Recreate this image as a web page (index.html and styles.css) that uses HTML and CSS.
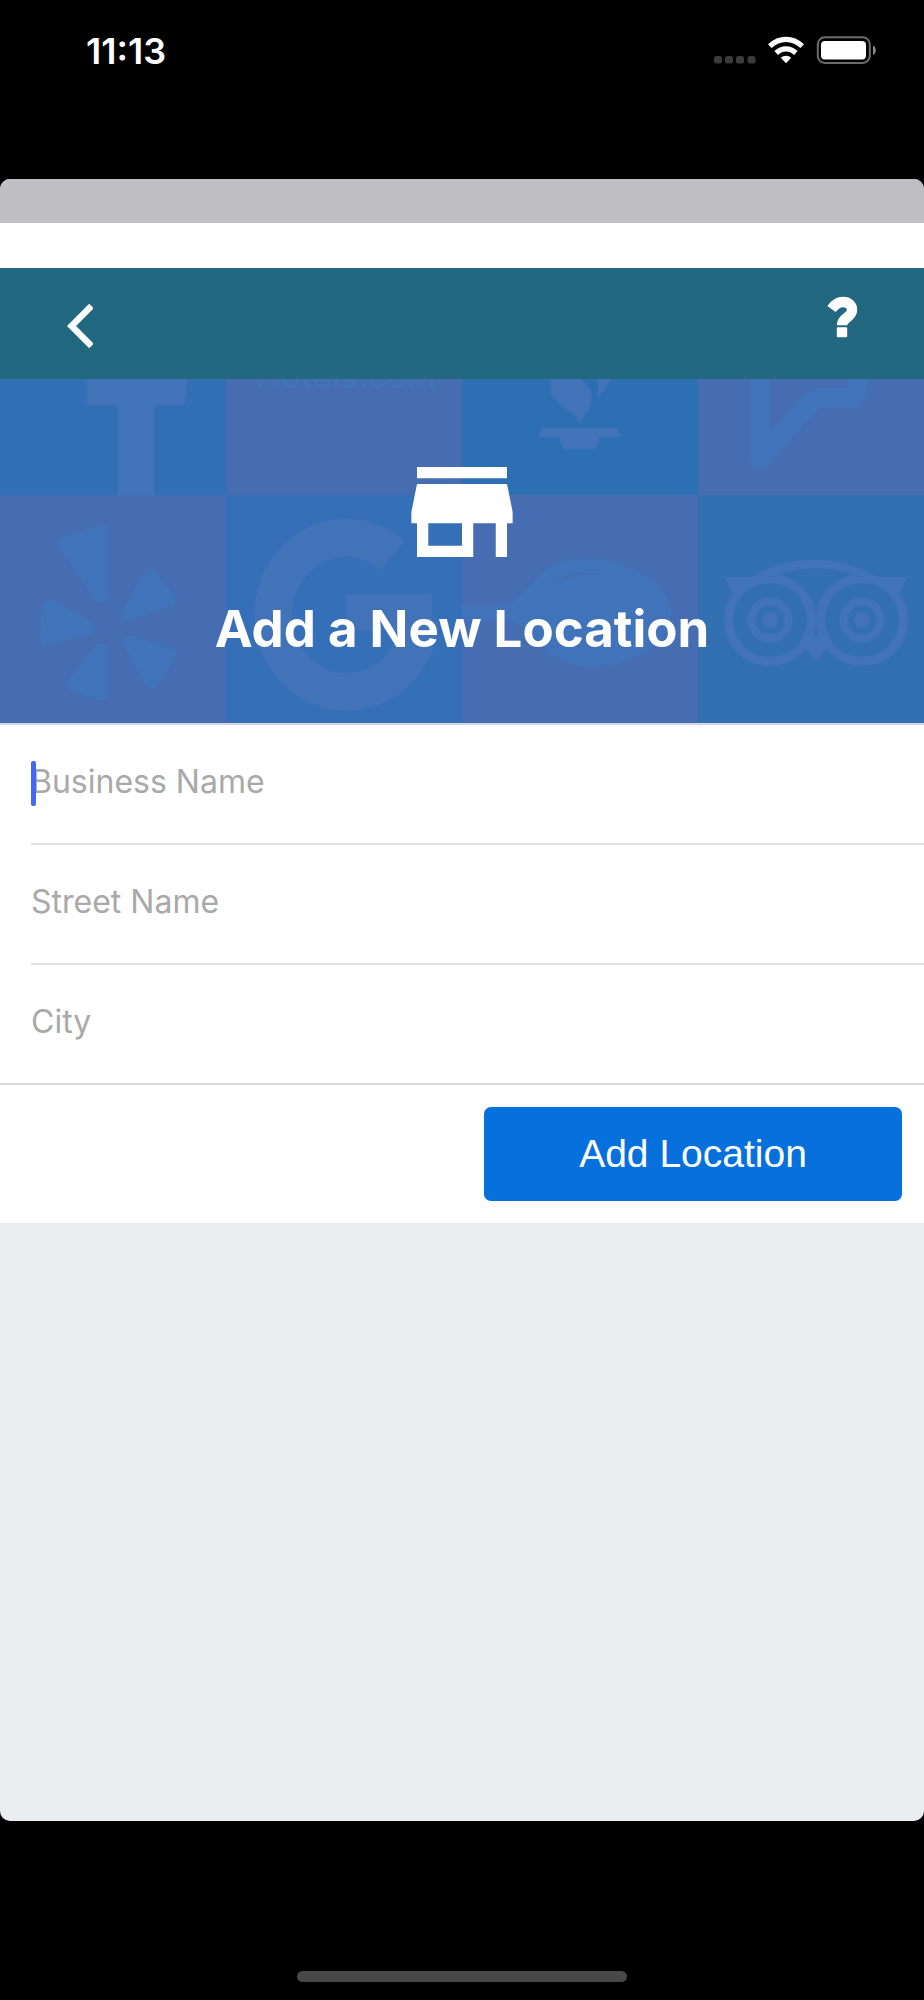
FILE: index.html
```html
<!DOCTYPE html>
<html lang="en">
<head>
<meta charset="utf-8">
<meta name="viewport" content="width=device-width, initial-scale=1">
<title>Add a New Location</title>
<link rel="stylesheet" href="styles.css">
</head>
<body>
<header class="status">
  <time class="status-time">11:13</time>
  <svg class="status-icons" viewBox="0 0 162 28" aria-hidden="true">
    <g fill="#3b3b3b">
      <rect x="0" y="20" width="8" height="7.5" rx="2.5"/>
      <rect x="11" y="20" width="8" height="7.5" rx="2.5"/>
      <rect x="22" y="20" width="8" height="7.5" rx="2.5"/>
      <rect x="33.500" y="20" width="8" height="7.5" rx="2.5"/>
    </g>
    <g fill="none" stroke="#fff" stroke-width="5.200">
      <path d="M55.800 10.200C65.500 1.200 78.500 1.200 88.200 10.200"/>
      <path d="M62.200 17C68 11.600 76 11.600 81.800 17"/>
    </g>
    <path fill="#fff" d="M66.800 21.800C69.500 19 74.500 19 77.200 21.800L72 27.300Z"/>
    <rect x="103.800" y="1.300" width="52" height="25.600" rx="7" fill="none" stroke="#6b6b6b" stroke-width="2"/>
    <rect x="107" y="5" width="45" height="18.600" rx="4" fill="#fff"/>
    <path fill="#8a8a8a" d="M159 9.500C162.700 11 162.700 17.500 159 19Z"/>
  </svg>
</header>

<main class="sheet">
  <div class="sheet-grip"></div>
  <div class="sheet-gap"></div>
  <nav class="navbar">
    <button class="nav-btn" type="button" aria-label="Back">
      <svg class="icon-back" viewBox="67 303 26 46"><path d="M91.500 306L71.500 326L91.500 346" fill="none" stroke="#fff" stroke-width="6.500"/></svg>
    </button>
    <button class="nav-btn nav-help" type="button" aria-label="Help">
      <svg class="icon-help" viewBox="827 296 32 42">
        <path d="M831.500 309C835.500 303.500 838.500 302 843 302C848.500 302 852 305 852 310C852 317.500 842 317.500 842 325.200" fill="none" stroke="#fff" stroke-width="10.400"/>
        <rect x="836.800" y="327.300" width="10.400" height="10" rx="1" fill="#fff"/>
      </svg>
    </button>
  </nav>

  <section class="hero">
    <svg class="hero-art" viewBox="0 0 924 344" preserveAspectRatio="xMidYMid slice" aria-hidden="true">
      <rect width="924" height="344" fill="#466db1"/>
      <rect width="226" height="116" fill="#326fb7"/>
      <rect x="462" width="236" height="116" fill="#2d6fb3"/>
      <rect x="226" y="116" width="236" height="228" fill="#346fb7"/>
      <rect x="698" y="116" width="226" height="228" fill="#3370b1"/>
      <g fill="#4272b8">
        <path d="M87 0H188L184.500 26H87Z"/>
        <rect x="118" y="25" width="36" height="91"/>
        <path d="M551 0C549 8 550 16 555 21C562 29 571 33 577 38V42L579.500 44L589 30C594 21 594 8 579 0Z"/>
        <path d="M597 0C599 6 598 12 597 16L598 19L612 0Z"/>
        <path d="M541 49H617L621 58H600L596 70H563L559 58H538Z"/>
      </g>
      <text x="257" y="9" class="hero-brand">Hotels.com</text>
      <path d="M760 -10V80L811 23Q815 19 820 19H850Q855 19 856 12L861 -10" fill="none" stroke="#4073b9" stroke-width="20" stroke-linejoin="round"/>
      <g fill="#4073b9" stroke="#4073b9" stroke-width="14" stroke-linejoin="round">
        <path d="M65 165L101 152V217Z"/>
        <path d="M150 197L169 221L128 235Z"/>
        <path d="M49 227L88 248L47 260Z"/>
        <path d="M101 271V315L74 305Z"/>
        <path d="M130 263L169 276L152 302Z"/>
      </g>
      <path d="M393 176A73.500 77 0 1 0 420 242" fill="none" stroke="#4272b8" stroke-width="38"/>
      <rect x="346" y="215" width="86" height="37" rx="3" fill="#4272b8"/>
      <path d="M462 226H500C531 226 531 179 584 179C630 179 671 205 671 233C671 262 635 288 591 288C538 288 538 242 505 242H462Z" fill="#4073b9"/>
      <path d="M557 203C566 193 582 192 607 196C588 195 572 196 560 203Z" fill="#466db1"/>
      <g fill="none" stroke="#4272b8" stroke-width="9">
        <circle cx="770" cy="241" r="41.500"/>
        <circle cx="862" cy="241" r="41.500"/>
        <circle cx="770" cy="241" r="18.500" stroke-width="8"/>
        <circle cx="862" cy="241" r="18.500" stroke-width="8"/>
      </g>
      <g fill="#4272b8">
        <circle cx="770" cy="241" r="8"/>
        <circle cx="862" cy="241" r="8"/>
        <path d="M724 198H752C788 175 840 175 876 198H908L898 216L894 222C888 206 876 198 860 197C835 187 797 187 772 197C756 198 744 206 738 222L733 214Z"/>
        <path d="M805 269L816 256L827 269L816 283Z"/>
      </g>
    </svg>
    <svg class="icon-store" viewBox="3 4 18 16" aria-hidden="true"><path fill="#fff" d="M20 4H4v2h16V4zm1 10v-2l-1-5H4l-1 5v2h1v6h10v-6h4v6h2v-6h1zm-9 4H6v-4h6v4z"/></svg>
    <h1 class="hero-title">Add a New Location</h1>
  </section>

  <form class="form">
    <div class="field field-active"><input class="field-input" type="text" aria-label="Business Name" placeholder="Business Name"></div>
    <div class="field"><input class="field-input" type="text" aria-label="Street Name" placeholder="Street Name"></div>
    <div class="field"><input class="field-input" type="text" aria-label="City" placeholder="City"></div>
    <div class="actions"><button class="submit" type="button">Add Location</button></div>
  </form>
</main>

<footer class="dock"><div class="home-bar"></div></footer>
</body>
</html>
```

FILE: styles.css
```css
* {
  box-sizing: border-box;
}

body {
  margin: 0;
  min-height: 100vh;
  display: flex;
  flex-direction: column;
  background: #000;
  font-family: Inter, "Liberation Sans", sans-serif;
}

button {
  border: 0;
  padding: 0;
  cursor: pointer;
}

svg {
  display: block;
}

.status {
  display: flex;
  justify-content: space-between;
  align-items: flex-start;
  height: 179px;
  padding: 30px 48px 0 86px;
  color: #fff;
}

.status-time {
  font-size: 36px;
  font-weight: 600;
  line-height: 42px;
}

.status-icons {
  width: 162px;
  height: 28px;
  margin-top: 6px;
}

.sheet {
  flex: 1;
  display: flex;
  flex-direction: column;
  overflow: hidden;
  border-radius: 10px;
  background: #eaeef1;
}

.sheet-grip {
  height: 44px;
  background: #bfbec3;
}

.sheet-gap {
  height: 45px;
  background: #fff;
}

.navbar {
  display: flex;
  justify-content: space-between;
  align-items: flex-start;
  height: 111px;
  padding: 28px 65px 0 67px;
  background: #226880;
}

.nav-btn {
  background: none;
}

.icon-back {
  width: 26px;
  height: 46px;
  margin-top: 7px;
}

.icon-help {
  width: 32px;
  height: 42px;
}

.hero {
  position: relative;
  display: flex;
  flex-direction: column;
  align-items: center;
  height: 344px;
  padding-top: 88px;
  color: #fff;
}

.hero-art {
  position: absolute;
  inset: 0;
  width: 100%;
  height: 100%;
}

.hero-brand {
  font: 500 33px Inter, sans-serif;
  fill: #4073b9;
}

.icon-store {
  position: relative;
  width: 102px;
  height: 90px;
}

.hero-title {
  position: relative;
  margin: 40px 0 0;
  font-size: 51px;
  font-weight: 700;
  line-height: 64px;
}

.form {
  background: #fff;
  border-top: 2px solid #d5d7dc;
}

.field {
  position: relative;
  height: 120px;
  margin-left: 31px;
  border-bottom: 2px solid #e2e2e2;
}

.field:nth-child(3) {
  margin-left: 0;
  padding-left: 31px;
  border-bottom-color: #d8d8d8;
}

.field-active::before {
  content: "";
  position: absolute;
  left: 0;
  top: 36px;
  width: 5px;
  height: 45px;
  border-radius: 2px;
  background: #4169f5;
}

.field-input {
  width: 100%;
  height: 112px;
  padding: 0;
  border: 0;
  outline: 0;
  background: none;
  font: 400 32px Inter, sans-serif;
  color: #222;
}

.field-input::placeholder {
  color: #a9a9a9;
  opacity: 1;
}

.actions {
  display: flex;
  justify-content: flex-end;
  padding: 22px;
}

.submit {
  width: 418px;
  height: 94px;
  border-radius: 7px;
  background: #0670dd;
  color: #fff;
  font: 400 39px "Liberation Sans", Arial, sans-serif;
}

.dock {
  display: flex;
  justify-content: center;
  align-items: flex-end;
  height: 179px;
  padding-bottom: 18px;
}

.home-bar {
  width: 330px;
  height: 11px;
  border-radius: 6px;
  background: #484848;
}
```
